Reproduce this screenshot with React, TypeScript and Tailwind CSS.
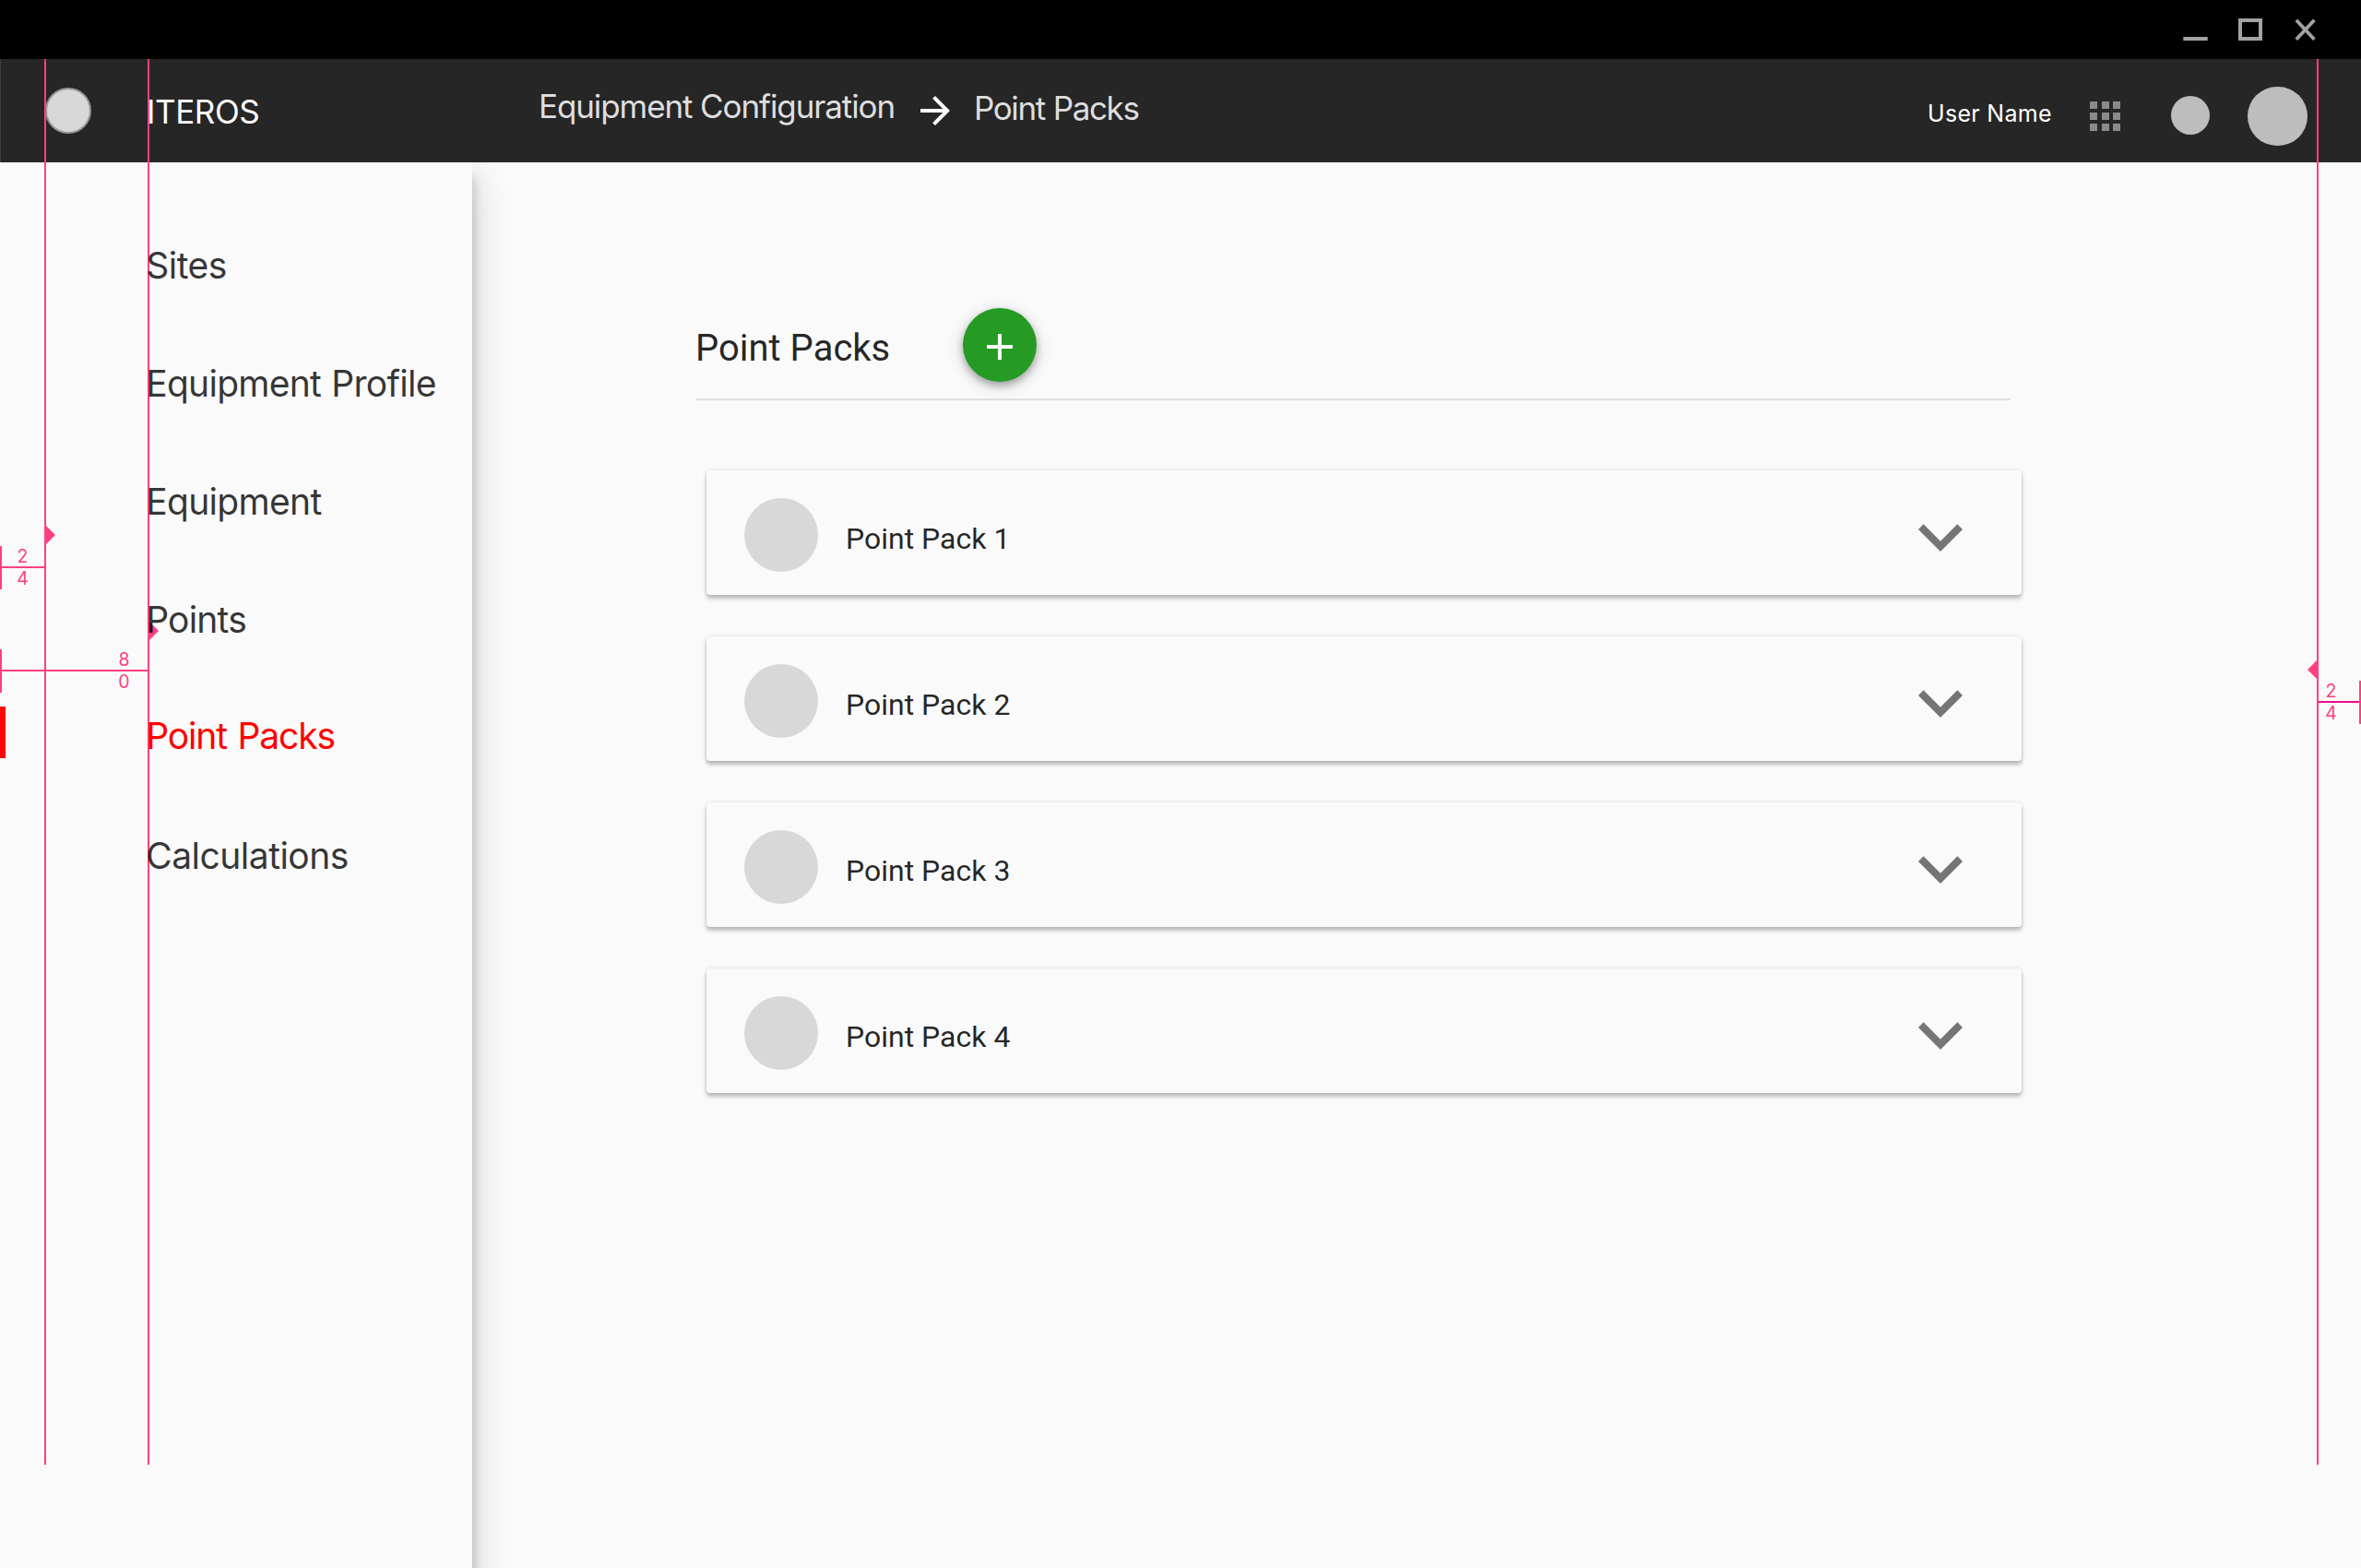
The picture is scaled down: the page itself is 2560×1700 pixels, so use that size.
import type { ReactNode } from "react";

const navItems = [
  { label: "Sites", className: "mb-20 tracking-[-0.5px] text-black/80" },
  { label: "Equipment Profile", className: "mb-20 tracking-[-0.72px] [word-spacing:1px] text-black/80" },
  { label: "Equipment", className: "mb-20 tracking-[-0.68px] text-black/80" },
  { label: "Points", className: "mb-[78px] tracking-[-0.8px] text-black/80" },
  { label: "Point Packs", className: "mb-[82px] tracking-[-1.15px] [word-spacing:2px] text-[#ff0000]", active: true },
  { label: "Calculations", className: "tracking-[-0.51px] text-black/80" },
];

const packs = ["Point Pack 1", "Point Pack 2", "Point Pack 3", "Point Pack 4"];

function WindowBar() {
  return (
    <div className="flex h-16 items-start justify-end bg-black pr-[49px] pt-5">
      <svg className="mr-[33px] h-6 w-[27px]" viewBox="0 0 27 24">
        <path d="M0.3 20h26.4v4H0.3z" fill="#a3a3a3" />
      </svg>
      <svg className="mr-[35px] h-6 w-[26px]" viewBox="0 0 26 24">
        <rect x="2" y="2" width="22" height="20" fill="none" stroke="#a3a3a3" strokeWidth="4" />
      </svg>
      <svg className="h-6 w-[23px]" viewBox="0 0 23 24">
        <path d="M1.8 1.7L21.4 22.7M21.4 1.7L1.8 22.7" stroke="#a3a3a3" strokeWidth="3.8" />
      </svg>
    </div>
  );
}

function Header() {
  return (
    <header className="flex h-28 items-start border-l border-[#404040] bg-[#262626]">
      <div className="ml-12 mt-[31px] size-[50px] shrink-0 rounded-full border-2 border-[#979797] bg-[#d8d8d8]" />
      <div className="relative z-20 ml-[60px] mt-[37px] w-[425px] text-[35px] leading-10 tracking-[-0.4px] text-white">
        ITEROS
      </div>
      <nav className="flex items-start text-[35px] leading-10 text-[#dedede]">
        <span className="mt-[31px] w-[406px] whitespace-nowrap tracking-[-1.1px]">Equipment Configuration</span>
        <svg className="mr-[18px] mt-8 size-12" viewBox="0 0 24 24" fill="#fff">
          <path d="M12 4l-1.41 1.41L16.17 11H4v2h12.17l-5.58 5.59L12 20l8-8z" />
        </svg>
        <span className="mt-[33px] whitespace-nowrap tracking-[-1.4px] [word-spacing:0.6px]">Point Packs</span>
      </nav>
      <div className="ml-auto flex items-start pr-[58px]">
        <span className="mr-[42px] mt-[43px] w-[134px] whitespace-nowrap text-[25px] leading-8 tracking-[0.3px] text-white">
          User Name
        </span>
        <div className="mr-[55px] mt-[46px] grid grid-cols-3 gap-x-[4.5px] gap-y-1">
          {Array.from({ length: 9 }, (_, i) => (
            <div key={i} className="size-2 bg-[#8a8a8a]" />
          ))}
        </div>
        <div className="mr-[41px] mt-10 size-[42px] rounded-full bg-[#bdbdbd]" />
        <div className="mt-[30px] h-16 w-[65px] rounded-full bg-[#bdbdbd]" />
      </div>
    </header>
  );
}

function Sidebar() {
  return (
    <aside className="h-[1640px] w-[512px] shrink-0 bg-[#fafafa] pt-[88px] text-[39px] leading-[48px] shadow-[0_16px_12px_rgba(0,0,0,0.22),0_14px_40px_rgba(0,0,0,0.18)]">
      {navItems.map((item) => (
        <div key={item.label} className={`relative h-12 pl-[158.2px] ${item.className}`}>
          {item.active && <div className="absolute -top-2 left-0 h-14 w-1.5 bg-[#ff0505]" />}
          <span className="relative z-20 whitespace-nowrap">{item.label}</span>
        </div>
      ))}
    </aside>
  );
}

function PackCard({ label }: { label: string }) {
  return (
    <div className="flex h-[135px] items-start rounded bg-[#fafafa] pl-[41px] pr-10 shadow-[0_4px_4px_rgba(0,0,0,0.24),0_0_4px_rgba(0,0,0,0.12)]">
      <div className="mt-[30px] size-20 rounded-full bg-[#d8d8d8]" />
      <span className="ml-[30px] mt-[54px] text-[32px] leading-10 text-black/87">{label}</span>
      <svg className="ml-auto mt-6 size-24" viewBox="0 0 24 24" fill="#757575">
        <path d="M16.59 8.59L12 13.17 7.41 8.59 6 10l6 6 6-6z" />
      </svg>
    </div>
  );
}

function Content() {
  return (
    <main className="relative flex-1 pl-[242px] pr-[380px] font-['Roboto',sans-serif]">
      <div className="flex h-[258px] items-start border-b-2 border-[#e0e0e0]">
        <h1 className="mt-[178px] w-[290px] text-[40px] leading-[48px] text-black/87">Point Packs</h1>
        <button className="mt-[158px] flex size-20 items-center justify-center rounded-full bg-[#259b24] pt-1 shadow-[0_4px_8px_rgba(0,0,0,0.3),0_4px_20px_rgba(0,0,0,0.14)]">
          <svg className="size-12" viewBox="0 0 24 24" fill="#fff">
            <path d="M19 13h-6v6h-2v-6H5v-2h6V5h2v6h6v2z" />
          </svg>
        </button>
      </div>
      <div className="-mr-3 ml-3 mt-[76px] flex flex-col gap-[45px]">
        {packs.map((p) => (
          <PackCard key={p} label={p} />
        ))}
      </div>
    </main>
  );
}

function Digits({ className, children }: { className: string; children: ReactNode }) {
  return <div className={`absolute flex w-3 flex-col items-center text-[19.5px] leading-6 text-[#ff4081] ${className}`}>{children}</div>;
}

function KeylineOverlay() {
  return (
    <div className="pointer-events-none absolute inset-0 z-10">
      <div className="absolute left-12 top-16 h-[1524px] w-0.5 bg-[#ff4081]" />
      <div className="absolute left-40 top-16 h-[1524px] w-0.5 bg-[#ff4081]" />
      <div className="absolute left-[2512px] top-16 h-[1524px] w-0.5 bg-[#ff4081]" />

      <svg className="absolute left-[49px] top-[569px] h-[22px] w-[11px]" viewBox="0 0 11 22" fill="#ff4081">
        <path d="M0 0l11 11L0 22z" />
      </svg>
      <svg className="absolute left-[161px] top-[673px] h-[22px] w-[11px]" viewBox="0 0 11 22" fill="#ff4081">
        <path d="M0 0l11 11L0 22z" />
      </svg>
      <svg className="absolute left-[2502px] top-[715px] h-[22px] w-[11px]" viewBox="0 0 11 22" fill="#ff4081">
        <path d="M11 0L0 11l11 11z" />
      </svg>

      <div className="absolute left-0 top-[592px] h-[47px] w-0.5 bg-[#ff4081]" />
      <div className="absolute left-0.5 top-[614px] h-0.5 w-[46px] bg-[#ff4081]" />
      <Digits className="left-[18.5px] top-[591px]">
        <span>2</span>
        <span>4</span>
      </Digits>

      <div className="absolute left-0 top-[704px] h-[47px] w-0.5 bg-[#ff4081]" />
      <div className="absolute left-0.5 top-[726px] h-0.5 w-[158px] bg-[#ff4081]" />
      <Digits className="left-[128.5px] top-[703px]">
        <span>8</span>
        <span>0</span>
      </Digits>

      <div className="absolute left-[2558px] top-[738px] h-[47px] w-0.5 bg-[#ff4081]" />
      <div className="absolute left-[2514px] top-[760px] h-0.5 w-11 bg-[#ec0c8c]" />
      <Digits className="left-[2521.5px] top-[737px]">
        <span>2</span>
        <span>4</span>
      </Digits>
    </div>
  );
}

export default function App() {
  return (
    <div className="relative h-[1700px] w-[2560px] overflow-hidden bg-[#fafafa] font-['Inter',sans-serif]">
      <WindowBar />
      <Header />
      <div className="flex h-[1524px] overflow-hidden">
        <Sidebar />
        <Content />
      </div>
      <KeylineOverlay />
    </div>
  );
}
